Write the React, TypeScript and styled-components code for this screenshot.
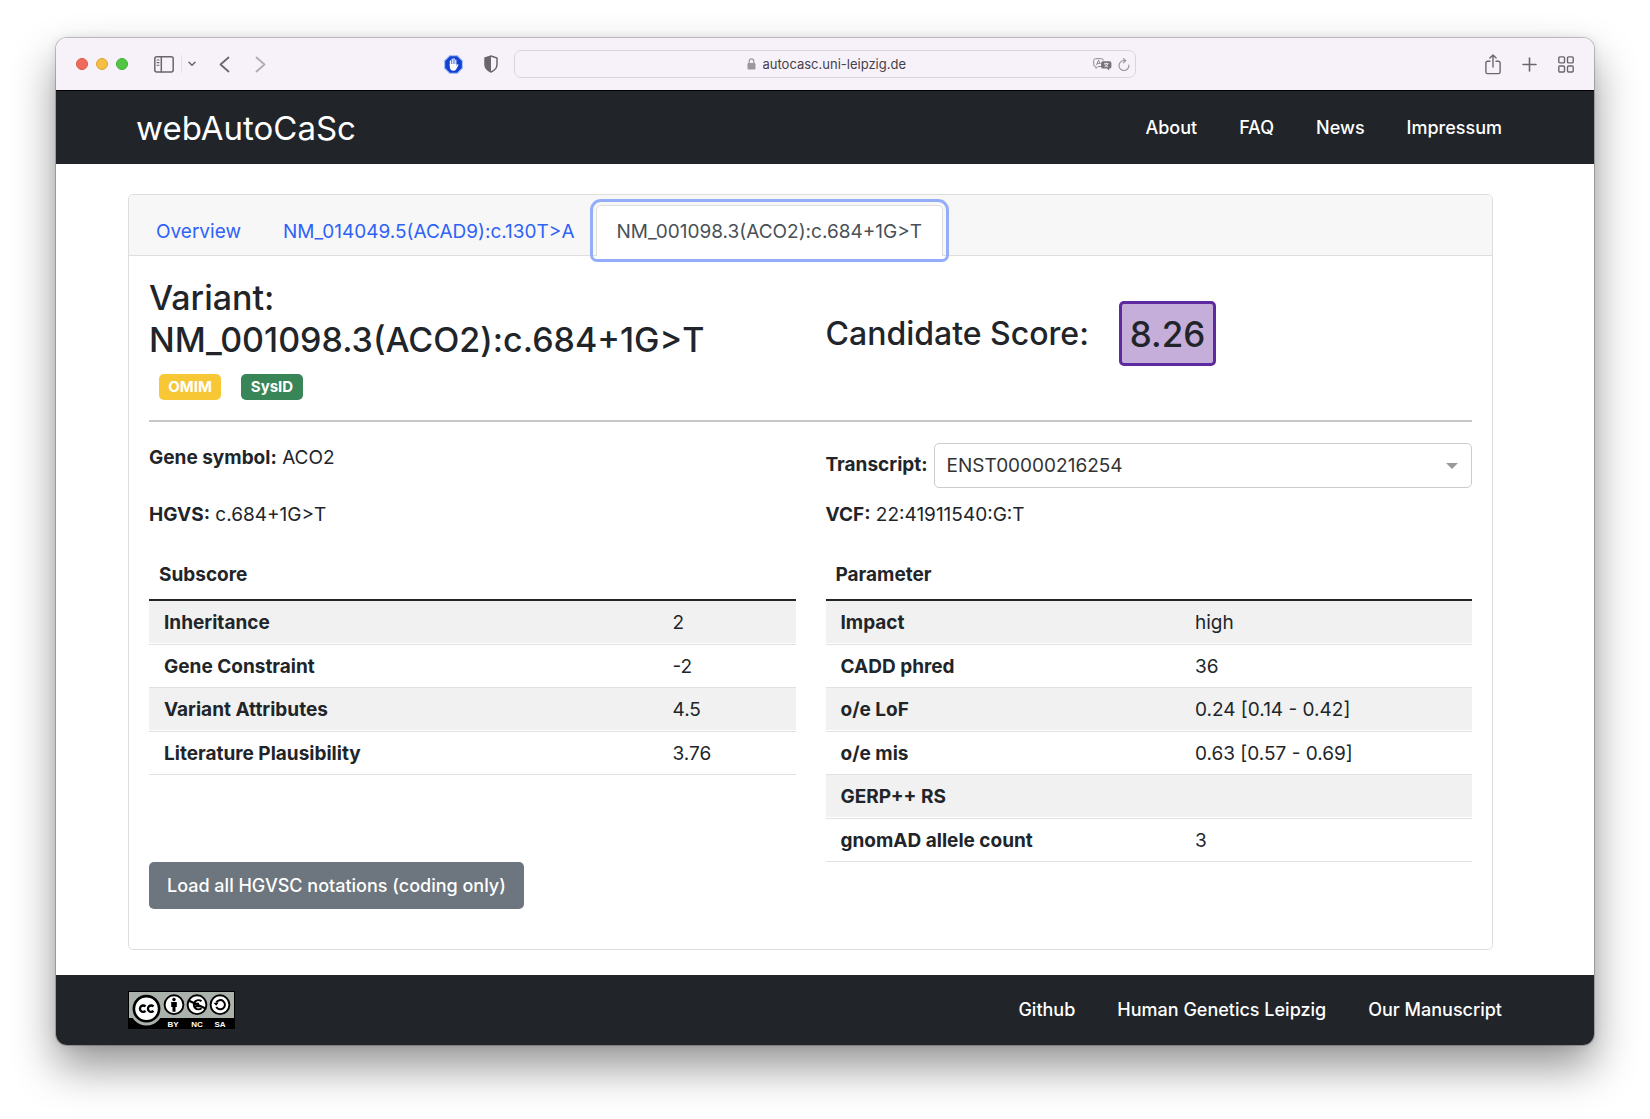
import React, { useState } from "react";
import styled, { createGlobalStyle } from "styled-components";

const ink = "#212529";
const link = "#2f62f6";
const line = "#dedede";

const GlobalStyle = createGlobalStyle`
  *, *::before, *::after { box-sizing: border-box; }
  body {
    margin: 0;
    background: #fff;
    color: ${ink};
    font: 400 19px/30px Inter, "Liberation Sans", sans-serif;
  }
  button, input, select { font: inherit; color: inherit; }
`;

const Desktop = styled.div`
  padding: 38px 56px 74px;
`;

const Window = styled.div`
  border-radius: 11px;
  overflow: hidden;
  background: #fff;
  box-shadow: 0 0 0 1px rgba(0, 0, 0, 0.2), 0 0 10px rgba(0, 0, 0, 0.1), 0 22px 44px rgba(0, 0, 0, 0.42);
`;

const TitleBar = styled.header`
  display: flex;
  align-items: center;
  gap: 16px;
  height: 53px;
  padding: 0 20px;
  background: #f7f2fa;
  border-bottom: 1px solid #000;
  color: #6b666e;
`;

const BarSide = styled.div<{ $end?: boolean }>`
  display: flex;
  flex: 1;
  align-items: center;
  justify-content: ${(p) => (p.$end ? "flex-end" : "flex-start")};
  gap: ${(p) => (p.$end ? "21px" : "0")};
`;

const Lights = styled.div`
  display: flex;
  gap: 8px;
  margin-right: 26px;
`;

const Light = styled.span<{ $color: string; $edge: string }>`
  width: 12px;
  height: 12px;
  border-radius: 50%;
  background: ${(p) => p.$color};
  border: 1px solid ${(p) => p.$edge};
`;

const IconButton = styled.button<{ $faded?: boolean }>`
  display: flex;
  padding: 0;
  border: 0;
  background: none;
  opacity: ${(p) => (p.$faded ? 0.5 : 1)};
`;

const Divider = styled.span`
  width: 1px;
  height: 18px;
  margin: 0 6px 0 7px;
  background: #e3dde6;
`;

const History = styled.div`
  display: flex;
  gap: 25px;
  margin-left: 23px;
`;

const Extensions = styled.div`
  display: flex;
  align-items: center;
  gap: 21px;
  margin-left: auto;
`;

const AddressBar = styled.div`
  display: flex;
  flex: 0 1 622px;
  align-items: center;
  height: 28px;
  padding: 0 5px;
  border: 1px solid #dad5dd;
  border-radius: 7px;
`;

const Address = styled.label`
  display: flex;
  flex: 1;
  align-items: center;
  justify-content: center;
  gap: 7px;
  padding-left: 40px;
`;

const AddressInput = styled.input`
  width: 144px;
  padding: 0;
  border: 0;
  outline: 0;
  background: none;
  color: #454147;
  font-size: 13px;
  line-height: 20px;
`;

const AddressTools = styled.div`
  display: flex;
  align-items: center;
  gap: 6px;
`;

const DarkBar = styled.div<{ $height: number; $left: number }>`
  display: flex;
  align-items: center;
  justify-content: space-between;
  min-height: ${(p) => p.$height}px;
  padding: 0 92px 0 ${(p) => p.$left}px;
  background: #212529;
  color: #fff;
`;

const Brand = styled.a`
  font-size: 33px;
  line-height: 50px;
  color: inherit;
  text-decoration: none;
`;

const Links = styled.nav`
  display: flex;
  gap: 42px;
`;

const NavLink = styled.a`
  color: inherit;
  font-size: 18px;
  font-weight: 500;
  text-decoration: none;
`;

const Page = styled.main`
  padding: 30px 101px 25px 72px;
`;

const Card = styled.section`
  border: 1px solid ${line};
  border-radius: 5px;
`;

const Tabs = styled.div`
  display: flex;
  padding: 10px 6px 0;
  background: #f7f7f7;
  border-bottom: 1px solid ${line};
  border-radius: 4px 4px 0 0;
`;

const Tab = styled.button<{ $active: boolean }>`
  height: 51px;
  margin-bottom: -1px;
  padding: 2px 20px 0;
  white-space: nowrap;
  border: 1px solid ${(p) => (p.$active ? line : "transparent")};
  border-bottom: 0;
  border-radius: 5px 5px 1px 1px;
  background: ${(p) => (p.$active ? "#fff" : "transparent")};
  color: ${(p) => (p.$active ? "#495057" : link)};
  outline: ${(p) => (p.$active ? "3px solid #94adf8" : "0")};
  outline-offset: 3px;
`;

const CardBody = styled.div`
  padding: 21px 20px 40px;
`;

const Columns = styled.div`
  display: grid;
  grid-template-columns: 1fr 1fr;
  column-gap: 30px;
`;

const Heading = styled.h2<{ $compact?: boolean }>`
  margin: 0;
  font-size: ${(p) => (p.$compact ? 32 : 34)}px;
  font-weight: 500;
  line-height: 42px;
`;

const Badges = styled.div`
  display: flex;
  gap: 20px;
  padding: 13px 10px 0;
`;

const Badge = styled.span<{ $color: string }>`
  min-width: 62px;
  padding: 3px 8px;
  border-radius: 5px;
  background: ${(p) => p.$color};
  color: #fff;
  font-size: 15px;
  font-weight: 700;
  line-height: 20px;
  text-align: center;
`;

const ScoreRow = styled.div`
  display: flex;
  align-items: center;
  align-self: start;
  gap: 30px;
  padding-top: 24px;
`;

const Score = styled.output`
  padding: 9px 8px 7px;
  border: 3px solid #5d2a9f;
  border-radius: 5px;
  background: #c5aed9;
  font-size: 35px;
  font-weight: 500;
  line-height: 43px;
`;

const Rule = styled.hr`
  height: 2px;
  margin: 20px 0;
  border: 0;
  background: #c8c8c8;
`;

const Fact = styled.p`
  margin: 0;
  padding-top: 1px;
  min-height: 57px;
`;

const Field = styled.div`
  display: flex;
  align-items: flex-start;
  gap: 6px;
  padding-top: 1px;
`;

const FieldLabel = styled.label`
  padding-top: 7px;
  font-weight: 700;
`;

const SelectBox = styled.div`
  display: flex;
  flex: 1;
  align-items: center;
  height: 45px;
  padding-right: 13px;
  border: 1px solid #ccc;
  border-radius: 5px;
`;

const Select = styled.select`
  flex: 1;
  height: 43px;
  padding: 0 12px;
  border: 0;
  outline: 0;
  appearance: none;
  background: none;
  color: #333;
`;

const DataTable = styled.table<{ $values: number }>`
  width: 100%;
  align-self: start;
  table-layout: fixed;
  border-collapse: separate;
  border-spacing: 0;
  text-align: left;

  col:last-child { width: ${(p) => p.$values}px; }

  thead th {
    padding: 4px 10px 9px;
    border-bottom: 2px solid ${ink};
  }

  tbody th, tbody td {
    padding: 7px 15px 5px;
    border-bottom: 1px solid #dee2e6;
  }

  tbody tr:nth-child(odd) > * {
    padding-bottom: 6px;
    background: #f1f1f1;
    box-shadow: inset 0 -1px #fff;
  }
`;

const LoadButton = styled.button`
  height: 47px;
  padding: 0 18px;
  border: 0;
  border-radius: 5px;
  background: #6d757e;
  color: #fff;
  font-size: 18px;
  font-weight: 500;
`;

const stroke = { fill: "none", stroke: "currentColor", strokeLinecap: "round", strokeLinejoin: "round" } as const;

const SidebarIcon = () => (
  <svg width="20" height="17" viewBox="0 0 20 17" {...stroke} strokeWidth="1.5">
    <rect x="0.8" y="0.8" width="18.4" height="15.2" rx="2" />
    <path d="M7.3 1v15" />
    <path d="M3 4h2M3 6.6h2M3 9.2h2" strokeWidth="1.1" />
  </svg>
);

const MenuChevron = () => (
  <svg width="8" height="6" viewBox="0 0 8 6" {...stroke} strokeWidth="1.5">
    <path d="M1 1.2l3 3 3-3" />
  </svg>
);

const Arrow = ({ forward }: { forward?: boolean }) => (
  <svg width="11" height="17" viewBox="0 0 11 17" {...stroke} strokeWidth="1.8">
    <path d={forward ? "M1.5 1.5l8 7-8 7" : "M9.5 1.5l-8 7 8 7"} />
  </svg>
);

const HandIcon = () => (
  <svg width="19" height="19" viewBox="0 0 19 19">
    <path d="M5.8 0.6h7.4l5.2 5.2v7.4l-5.2 5.2H5.8L0.6 13.2V5.8z" fill="#1142d4" stroke="#a9bdf3" strokeWidth="1.1" />
    <path
      d="M6.4 10V5.8M8.2 9.500V4.200M10 9.500V3.700M11.800 10V5"
      stroke="#fff"
      strokeWidth="1.2"
      strokeLinecap="round"
    />
    <path d="M5.8 9h6.6v2l1-1.500c.6-.6 1.300-.1 1 .6l-1.900 3.700c-.6 1.300-1.500 2-2.900 2-2.500 0-3.800-1.600-3.800-4z" fill="#fff" />
  </svg>
);

const ShieldIcon = () => (
  <svg width="14" height="18" viewBox="0 0 14 18">
    <path d="M7 1l6 2v6.5c0 3.6-2.6 6-6 7.5-3.4-1.5-6-3.9-6-7.5V3z" fill="none" stroke="currentColor" strokeWidth="1.5" />
    <path d="M7 1L1 3v6.5C1 13.1 3.6 15.5 7 17z" fill="currentColor" />
  </svg>
);

const LockIcon = () => (
  <svg width="9" height="12" viewBox="0 0 9 12">
    <rect x="0.5" y="5" width="8" height="6.5" rx="1.2" fill="#9c979f" />
    <path d="M2.2 5.5V3.2a2.3 2.3 0 014.6 0v2.3" fill="none" stroke="#9c979f" strokeWidth="1.2" />
  </svg>
);

const TranslateIcon = () => (
  <svg width="19" height="13" viewBox="0 0 19 13">
    <path
      d="M8 8.5H5l-2 2v-2h-.5A1.8 1.8 0 01.7 6.7V2.5A1.8 1.8 0 012.5.7h6a1.8 1.8 0 011.8 1.8"
      fill="none"
      stroke="#8c878f"
      strokeWidth="1"
    />
    <path d="M3.5 7l2-4.8L7.3 6M4.2 5.4h2.5" fill="none" stroke="#8c878f" strokeWidth="1" />
    <path d="M10 3.2h6.5a1.9 1.9 0 011.9 1.9v3.6a1.9 1.9 0 01-1.9 1.9h-.3v2l-2.2-2h-4a1.9 1.9 0 01-1.9-1.9V5.1A1.9 1.9 0 0110 3.2z" fill="#77727a" />
    <path d="M11 5.7h4.6M13.3 4.7v1M14.8 5.9c-.5 1.5-1.6 2.5-3.2 3.1M11.8 5.9c.6 1.5 1.7 2.5 3.3 3.1" fill="none" stroke="#f7f2fa" strokeWidth="0.9" />
  </svg>
);

const ReloadIcon = () => (
  <svg width="12" height="13" viewBox="0 0 12 13" fill="none" stroke="#9c979f" strokeWidth="1.2" strokeLinecap="round" strokeLinejoin="round">
    <path d="M10.8 7.2A4.9 4.9 0 116 2.7h1.5" />
    <path d="M5.6 0.7l2.2 2-2.2 2.2" />
  </svg>
);

const ShareIcon = () => (
  <svg width="16" height="21" viewBox="0 0 16 21" {...stroke} strokeWidth="1.4">
    <path d="M5 7.2H2.6A1.7 1.7 0 00.9 8.9v9a1.7 1.7 0 001.7 1.7h10.8a1.7 1.7 0 001.7-1.7v-9a1.7 1.7 0 00-1.7-1.7H11" />
    <path d="M8 13V1.2M4.9 4L8 1l3.1 3" />
  </svg>
);

const PlusIcon = () => (
  <svg width="15" height="15" viewBox="0 0 15 15" {...stroke} strokeWidth="1.6">
    <path d="M7.5 1v13M1 7.5h13" />
  </svg>
);

const GridIcon = () => (
  <svg width="16" height="17" viewBox="0 0 16 17" {...stroke} strokeWidth="1.4">
    <rect x="0.8" y="0.9" width="5.7" height="6" rx="1" />
    <rect x="9.5" y="0.9" width="5.7" height="6" rx="1" />
    <rect x="0.8" y="10" width="5.7" height="6" rx="1" />
    <rect x="9.5" y="10" width="5.7" height="6" rx="1" />
  </svg>
);

const CaretIcon = () => (
  <svg width="12" height="6" viewBox="0 0 12 6">
    <path d="M0 0h12L6 6z" fill="#999" />
  </svg>
);

const LicenseImage = styled.svg`
  display: block;
`;

const LicenseBadge = () => (
  <LicenseImage width="107" height="38" viewBox="0 0 107 38" role="img" aria-label="Creative Commons licence">
    <rect width="107" height="38" fill="#000" />
    <rect x="1" y="1" width="105" height="26" fill="#aab2ab" />
    <circle cx="18.5" cy="17.7" r="16.7" fill="#aab2ab" />
    <circle cx="18.5" cy="17.7" r="12.6" fill="#fff" stroke="#000" strokeWidth="2.6" />
    <g fill="none" stroke="#000" strokeWidth="2.3">
      <path d="M17.5 15.5a3.2 3.2 0 100 4.4M25.5 15.5a3.2 3.2 0 100 4.4" />
    </g>
    <g fill="#fff" stroke="#000" strokeWidth="1.9">
      <circle cx="46" cy="13.7" r="9.4" />
      <circle cx="69" cy="13.7" r="9.4" />
      <circle cx="92" cy="13.7" r="9.4" />
    </g>
    <circle cx="46" cy="8.5" r="1.7" />
    <path d="M43.2 10.9h5.6v5h-1.3v4.8h-3v-4.8h-1.3z" />
    <g fill="none" stroke="#000" strokeWidth="2">
      <path d="M73.5 10.3a4.6 4.6 0 100 6.9M66 12.7h5M66 15.2h6" />
      <path d="M60.5 9.5l17 8" strokeWidth="2.2" />
      <path d="M88.3 11.5A4.6 4.6 0 1188.3 15.9" />
    </g>
    <path d="M85.6 11.8h5l-2.5 3z" />
    <g fill="#fff" fontFamily="Liberation Sans, sans-serif" fontSize="8" fontWeight="700" textAnchor="middle">
      <text x="45" y="36">BY</text>
      <text x="69" y="36">NC</text>
      <text x="92" y="36">SA</text>
    </g>
  </LicenseImage>
);

const tabs = ["Overview", "NM_014049.5(ACAD9):c.130T>A", "NM_001098.3(ACO2):c.684+1G>T"];

const subscores: [string, string][] = [
  ["Inheritance", "2"],
  ["Gene Constraint", "-2"],
  ["Variant Attributes", "4.5"],
  ["Literature Plausibility", "3.76"],
];

const parameters: [string, string][] = [
  ["Impact", "high"],
  ["CADD phred", "36"],
  ["o/e LoF", "0.24 [0.14 - 0.42]"],
  ["o/e mis", "0.63 [0.57 - 0.69]"],
  ["GERP++ RS", ""],
  ["gnomAD allele count", "3"],
];

const ValueTable = ({ title, values, rows }: { title: string; values: number; rows: [string, string][] }) => (
  <DataTable $values={values}>
    <colgroup>
      <col />
      <col />
    </colgroup>
    <thead>
      <tr>
        <th colSpan={2}>{title}</th>
      </tr>
    </thead>
    <tbody>
      {rows.map(([name, value]) => (
        <tr key={name}>
          <th scope="row">{name}</th>
          <td>{value}</td>
        </tr>
      ))}
    </tbody>
  </DataTable>
);

export default function App() {
  const [active, setActive] = useState(2);

  return (
    <>
      <GlobalStyle />
      <Desktop>
        <Window>
          <TitleBar>
            <BarSide>
              <Lights>
                <Light $color="#f06b5b" $edge="#dd5546" />
                <Light $color="#f6be42" $edge="#dea535" />
                <Light $color="#52c644" $edge="#3fae33" />
              </Lights>
              <IconButton aria-label="Sidebar"><SidebarIcon /></IconButton>
              <Divider />
              <IconButton aria-label="Tab groups"><MenuChevron /></IconButton>
              <History>
                <IconButton aria-label="Back"><Arrow /></IconButton>
                <IconButton aria-label="Forward" $faded><Arrow forward /></IconButton>
              </History>
              <Extensions>
                <IconButton aria-label="Content blocker"><HandIcon /></IconButton>
                <IconButton aria-label="Privacy report"><ShieldIcon /></IconButton>
              </Extensions>
            </BarSide>
            <AddressBar>
              <Address>
                <LockIcon />
                <AddressInput aria-label="Address" defaultValue="autocasc.uni-leipzig.de" />
              </Address>
              <AddressTools>
                <IconButton aria-label="Translate"><TranslateIcon /></IconButton>
                <IconButton aria-label="Reload"><ReloadIcon /></IconButton>
              </AddressTools>
            </AddressBar>
            <BarSide $end>
              <IconButton aria-label="Share"><ShareIcon /></IconButton>
              <IconButton aria-label="New tab"><PlusIcon /></IconButton>
              <IconButton aria-label="Tab overview"><GridIcon /></IconButton>
            </BarSide>
          </TitleBar>

          <DarkBar $height={73} $left={80}>
            <Brand href="#home">webAutoCaSc</Brand>
            <Links>
              <NavLink href="#about">About</NavLink>
              <NavLink href="#faq">FAQ</NavLink>
              <NavLink href="#news">News</NavLink>
              <NavLink href="#impressum">Impressum</NavLink>
            </Links>
          </DarkBar>

          <Page>
            <Card>
              <Tabs role="tablist">
                {tabs.map((name, i) => (
                  <Tab key={name} role="tab" aria-selected={i === active} $active={i === active} onClick={() => setActive(i)}>
                    {name}
                  </Tab>
                ))}
              </Tabs>
              <CardBody>
                <Columns>
                  <div>
                    <Heading>
                      Variant:
                      <br />
                      NM_001098.3(ACO2):c.684+1G&gt;T
                    </Heading>
                    <Badges>
                      <Badge $color="#f8c736">OMIM</Badge>
                      <Badge $color="#388657">SysID</Badge>
                    </Badges>
                  </div>
                  <ScoreRow>
                    <Heading $compact>Candidate Score:</Heading>
                    <Score>8.26</Score>
                  </ScoreRow>
                </Columns>
                <Rule />
                <Columns>
                  <Fact><b>Gene symbol:</b> ACO2</Fact>
                  <Field>
                    <FieldLabel htmlFor="transcript">Transcript:</FieldLabel>
                    <SelectBox>
                      <Select id="transcript">
                        <option>ENST00000216254</option>
                      </Select>
                      <CaretIcon />
                    </SelectBox>
                  </Field>
                  <Fact><b>HGVS:</b> c.684+1G&gt;T</Fact>
                  <Fact><b>VCF:</b> 22:41911540:G:T</Fact>
                </Columns>
                <Columns>
                  <ValueTable title="Subscore" values={138} rows={subscores} />
                  <ValueTable title="Parameter" values={292} rows={parameters} />
                </Columns>
                <LoadButton>Load all HGVSC notations (coding only)</LoadButton>
              </CardBody>
            </Card>
          </Page>

          <DarkBar as="footer" $height={70} $left={72}>
            <LicenseBadge />
            <Links>
              <NavLink href="#github">Github</NavLink>
              <NavLink href="#genetics">Human Genetics Leipzig</NavLink>
              <NavLink href="#manuscript">Our Manuscript</NavLink>
            </Links>
          </DarkBar>
        </Window>
      </Desktop>
    </>
  );
}
